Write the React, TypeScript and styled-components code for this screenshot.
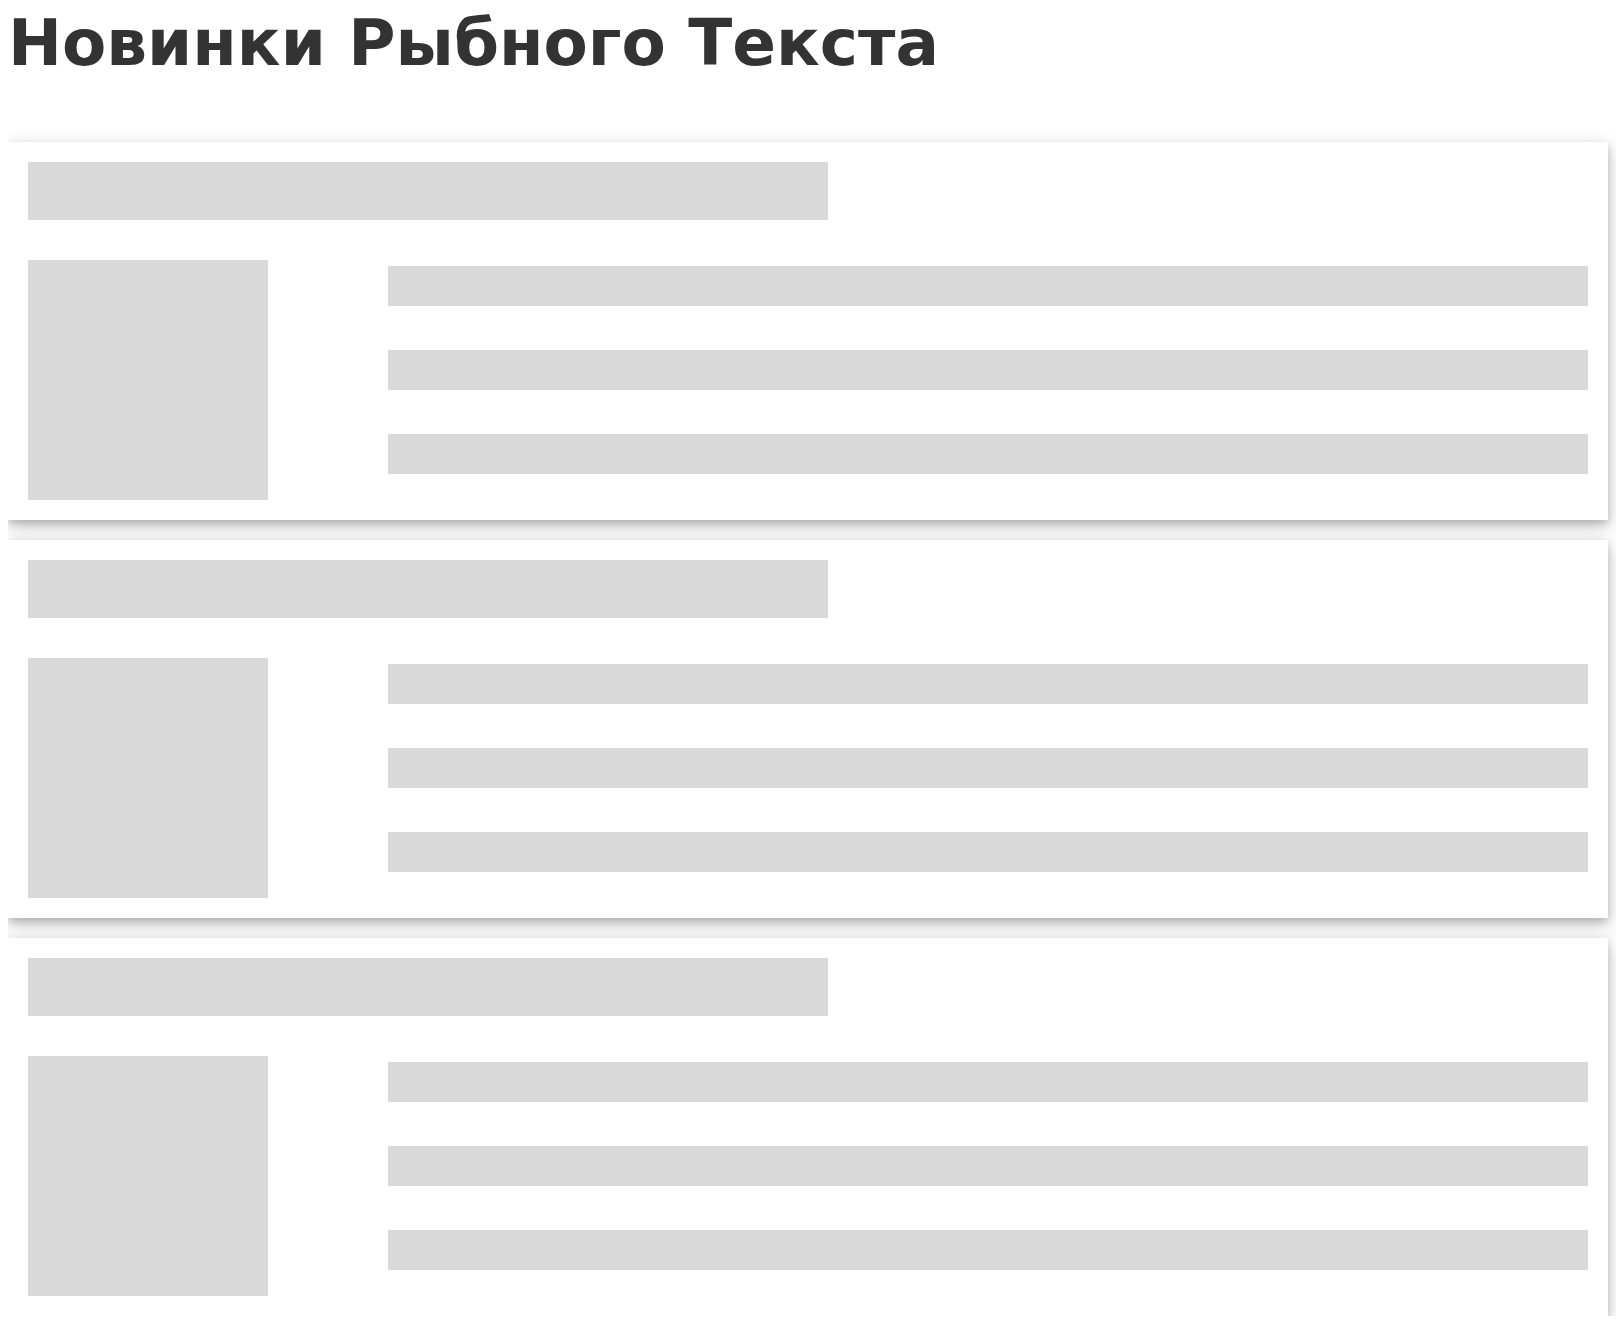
import React from "react";
import styled, { createGlobalStyle } from "styled-components";

const Global = createGlobalStyle`
  body {
    margin: 8px;
    background: #ffffff;
    font-family: "DejaVu Sans", Verdana, sans-serif;
  }
`;

const Heading = styled.h1`
  font-family: "DejaVu Sans", Verdana, sans-serif;
  font-size: 64.5px;
  font-weight: 700;
  color: #333333;
  margin: 0 0 63px 0;
  line-height: 1.1;
`;

const List = styled.div`
  display: flex;
  flex-direction: column;
  gap: 20px;
`;

const Card = styled.div`
  width: 1600px;
  box-sizing: border-box;
  padding: 20px;
  background: #ffffff;
  box-shadow: 0 4px 8px 0 rgba(0, 0, 0, 0.2), 0 6px 20px 0 rgba(0, 0, 0, 0.19);
  display: flex;
  flex-direction: column;
  gap: 40px;
`;

const Block = styled.div<{ $w: number; $h: number }>`
  width: ${(p) => p.$w}px;
  height: ${(p) => p.$h}px;
  background: #d9d9d9;
  flex-shrink: 0;
`;

const Body = styled.div`
  display: flex;
  gap: 120px;
`;

const Lines = styled.div`
  display: flex;
  flex-direction: column;
  gap: 44px;
  padding-top: 6px;
`;

const SkeletonCard = () => (
  <Card>
    <Block $w={800} $h={58} />
    <Body>
      <Block $w={240} $h={240} />
      <Lines>
        <Block $w={1200} $h={40} />
        <Block $w={1200} $h={40} />
        <Block $w={1200} $h={40} />
      </Lines>
    </Body>
  </Card>
);

export default function App() {
  return (
    <>
      <Global />
      <Heading lang="ru">Новинки Рыбного Текста</Heading>
      <List>
        <SkeletonCard />
        <SkeletonCard />
        <SkeletonCard />
      </List>
    </>
  );
}
